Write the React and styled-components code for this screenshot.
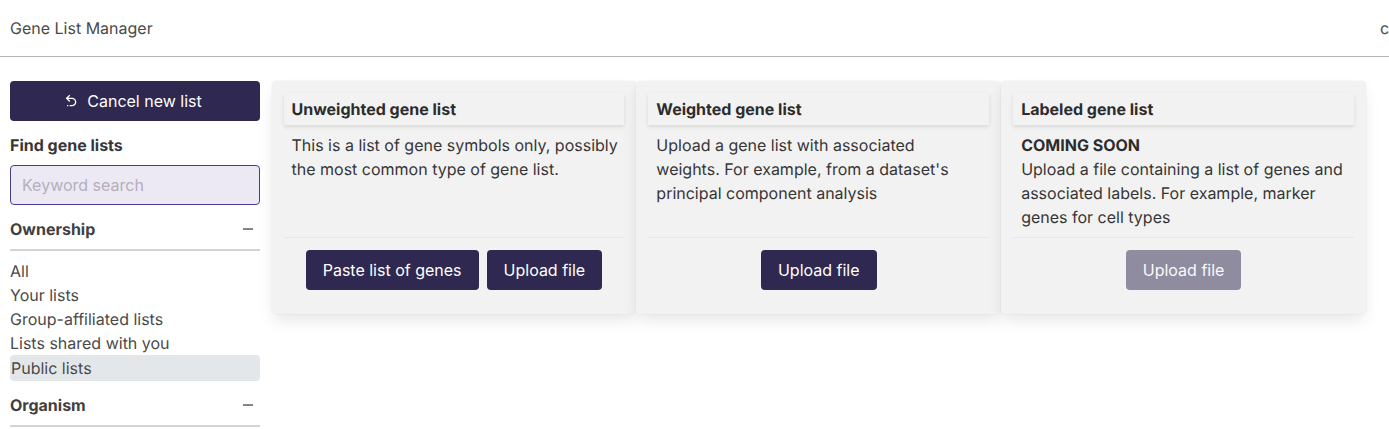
import React from "react";
import styled, { createGlobalStyle } from "styled-components";

const GlobalStyle = createGlobalStyle`
  *, *::before, *::after { box-sizing: border-box; }
  html, body { margin: 0; overflow: hidden; background: #fff; }
  body {
    font-family: Inter, "Liberation Sans", sans-serif;
    font-size: 16px;
    line-height: 24px;
    color: #4a4a4a;
    text-rendering: geometricPrecision;
  }
  button, input { font: inherit; margin: 0; }
`;

const Page = styled.div`
  height: 429px;
  overflow: hidden;
`;

const Header = styled.header`
  display: flex;
  align-items: center;
  justify-content: space-between;
  height: 57px;
  padding-left: 10px;
  border-bottom: 1px solid #b5b5b5;
  white-space: nowrap;
`;

const UserName = styled.span`
  width: 9px;
  overflow: hidden;
`;

const Main = styled.main`
  display: flex;
  align-items: flex-start;
  padding: 24px 23px 0 10px;
`;

const Sidebar = styled.aside`
  width: 250px;
  flex: none;
  margin-right: 11.5px;
`;

const Button = styled.button`
  display: inline-flex;
  align-items: center;
  justify-content: center;
  height: 40px;
  width: ${(p) => (p.$block ? "100%" : "auto")};
  padding: 0 17px;
  border: 0;
  border-radius: 4px;
  background: #2f2850;
  color: #fff;
  white-space: nowrap;
  &:disabled { opacity: 0.5; }
`;

const UndoIcon = styled.svg`
  width: 16px;
  height: 16px;
  margin: 0 8px 0 -5px;
  fill: currentColor;
`;

const SearchLabel = styled.label`
  display: block;
  margin: 12px 0 8px;
  color: #363636;
  font-weight: 700;
`;

const SearchInput = styled.input`
  display: block;
  width: 100%;
  height: 40px;
  padding: 0 11px;
  border: 1px solid #483d8b;
  border-radius: 4px;
  background: #ece8f4;
  color: #363636;
  &::placeholder { color: #b3b0ba; opacity: 1; }
`;

const FacetHeader = styled.div`
  display: flex;
  align-items: center;
  justify-content: space-between;
  height: 34px;
  margin-top: 12px;
  padding: 0 7px 8px 0;
  border-bottom: 2px solid #d3d3d3;
  color: #404040;
  font-weight: 700;
`;

const Minus = styled.span`
  width: 10px;
  height: 2px;
  margin-bottom: 1px;
  background: #858585;
`;

const FacetList = styled.ul`
  list-style: none;
  margin: 8px 0 0;
  padding: 0;
`;

const FacetItem = styled.li`
  border-radius: 4px;
  padding: ${(p) => (p.$selected ? "1px" : "0")};
  background: ${(p) => (p.$selected ? "#e3e7ea" : "transparent")};
`;

const Cards = styled.div`
  display: flex;
  flex: 1;
`;

const Card = styled.section`
  display: flex;
  flex-direction: column;
  flex: 1 1 0;
  height: 233px;
  padding: 12px;
  border-radius: 4px;
  background: #f2f2f2;
  color: #363636;
  box-shadow: 0 8px 16px -2px rgba(10, 10, 10, 0.1), 0 0 0 1px rgba(10, 10, 10, 0.02);
`;

const CardTitle = styled.h2`
  margin: 0;
  padding: 4px 8px;
  color: #2c2c2c;
  font-size: 16px;
  font-weight: 700;
  box-shadow: 0 2px 4px rgba(10, 10, 10, 0.1);
`;

const CardText = styled.p`
  flex: none;
  height: 112px;
  margin: 0;
  padding: 8px 4px 0 8px;
  strong { color: #2c2c2c; }
`;

const CardFooter = styled.footer`
  display: flex;
  justify-content: center;
  gap: 8px;
  padding-top: 12px;
  border-top: 1px solid #e7e7e7;
`;

function Facet({ title, items = [], selected }) {
  return (
    <>
      <FacetHeader>
        {title}
        <Minus />
      </FacetHeader>
      <FacetList>
        {items.map((item) => (
          <FacetItem key={item} $selected={item === selected}>{item}</FacetItem>
        ))}
      </FacetList>
    </>
  );
}

function ListTypeCard({ title, children, actions, disabled }) {
  return (
    <Card>
      <CardTitle>{title}</CardTitle>
      <CardText>{children}</CardText>
      <CardFooter>
        {actions.map((action) => (
          <Button key={action} disabled={disabled}>{action}</Button>
        ))}
      </CardFooter>
    </Card>
  );
}

export default function App() {
  return (
    <Page>
      <GlobalStyle />
      <Header>
        <span>Gene List Manager</span>
        <UserName>c</UserName>
      </Header>
      <Main>
        <Sidebar>
          <Button $block>
            <UndoIcon viewBox="0 0 24 24">
              <path d="M13.5,7A6.5,6.5 0 0,1 20,13.5A6.5,6.5 0 0,1 13.5,20H10V18H13.5C16,18 18,16 18,13.5C18,11 16,9 13.5,9H7.83L10.91,12.09L9.5,13.5L4,8L9.5,2.5L10.92,3.91L7.83,7H13.5M6,18H8V20H6V18Z" />
            </UndoIcon>
            Cancel new list
          </Button>
          <SearchLabel htmlFor="keyword">Find gene lists</SearchLabel>
          <SearchInput id="keyword" placeholder="Keyword search" />
          <Facet
            title="Ownership"
            items={["All", "Your lists", "Group-affiliated lists", "Lists shared with you", "Public lists"]}
            selected="Public lists"
          />
          <Facet title="Organism" />
        </Sidebar>
        <Cards>
          <ListTypeCard title="Unweighted gene list" actions={["Paste list of genes", "Upload file"]}>
            This is a list of gene symbols only, possibly the most common type of gene list.
          </ListTypeCard>
          <ListTypeCard title="Weighted gene list" actions={["Upload file"]}>
            Upload a gene list with associated
            <br />
            weights. For example, from a dataset's principal component analysis
          </ListTypeCard>
          <ListTypeCard title="Labeled gene list" actions={["Upload file"]} disabled>
            <strong>COMING SOON</strong>
            <br />
            Upload a file containing a list of genes and associated labels. For example, marker genes for cell types
          </ListTypeCard>
        </Cards>
      </Main>
    </Page>
  );
}
